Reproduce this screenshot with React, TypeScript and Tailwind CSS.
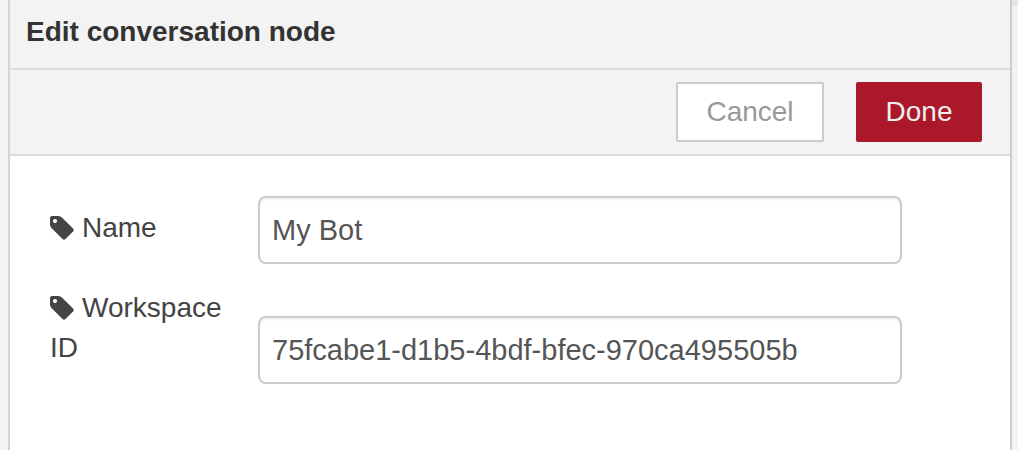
import { useState } from "react";

function TagIcon() {
  return (
    <svg
      viewBox="128 128 1536 1536"
      className="mr-2 inline-block size-6 align-[-3px]"
      fill="currentColor"
      aria-hidden="true"
    >
      <path d="M576 448q0-53-37.5-90.5t-90.5-37.5-90.5 37.5-37.5 90.5 37.5 90.5 90.5 37.5 90.5-37.5 37.5-90.5zm1067 576q0 53-37 90l-491 492q-39 37-91 37-53 0-90-37l-715-716q-38-37-64.5-101t-26.5-117v-416q0-52 38-90t90-38h416q53 0 117 26.5t102 64.5l715 714q37 39 37 91z" />
    </svg>
  );
}

type FieldProps = {
  id: string;
  label: string;
  value: string;
  onChange: (value: string) => void;
};

function Field({ id, label, value, onChange }: FieldProps) {
  return (
    <div className="flex items-end gap-2">
      <label htmlFor={id} className="w-50 shrink-0 pb-4 leading-10 text-[#444444]">
        <TagIcon />
        {label}
      </label>
      <input
        id={id}
        type="text"
        value={value}
        onChange={(event) => onChange(event.target.value)}
        className="h-17 w-[70%] min-w-0 rounded-lg border-2 border-[#cccccc] bg-white px-3 text-[29px] text-[#555555] shadow-[inset_0_2px_2px_rgba(0,0,0,0.05)] outline-none focus:border-[#999999]"
      />
    </div>
  );
}

export default function App() {
  const [name, setName] = useState("My Bot");
  const [workspace, setWorkspace] = useState("75fcabe1-d1b5-4bdf-bfec-970ca495505b");

  return (
    <div className="flex min-h-screen bg-[#f3f3f3] pl-2 font-['Liberation_Sans',Arial,sans-serif] text-[28px]">
      <main className="flex min-w-0 flex-1 flex-col border-x-2 border-l-[#d4d4d4] border-r-[#cccccc] bg-white">
        <header className="border-b-2 border-[#dddddd] bg-[#f3f3f3] px-4 pt-3 pb-4">
          <h1 className="leading-10 font-bold text-[#333333]">Edit conversation node</h1>
        </header>
        <div className="flex justify-end gap-8 border-b-2 border-[#dddddd] bg-[#f3f3f3] py-3 pr-7">
          <button
            type="button"
            className="h-15 w-37 rounded-xs border-2 border-[#cccccc] bg-white text-[#999999]"
          >
            Cancel
          </button>
          <button
            type="button"
            className="h-15 w-[126px] rounded-xs bg-[#ab1829] text-[#eeeeee]"
          >
            Done
          </button>
        </div>
        <form className="flex flex-col gap-6 p-10" onSubmit={(event) => event.preventDefault()}>
          <Field id="node-name" label="Name" value={name} onChange={setName} />
          <Field id="node-workspace" label="Workspace ID" value={workspace} onChange={setWorkspace} />
        </form>
      </main>
      <div className="w-[6px] shrink-0">
        <div className="h-[6px] bg-[#e6e6e6]" />
      </div>
    </div>
  );
}
